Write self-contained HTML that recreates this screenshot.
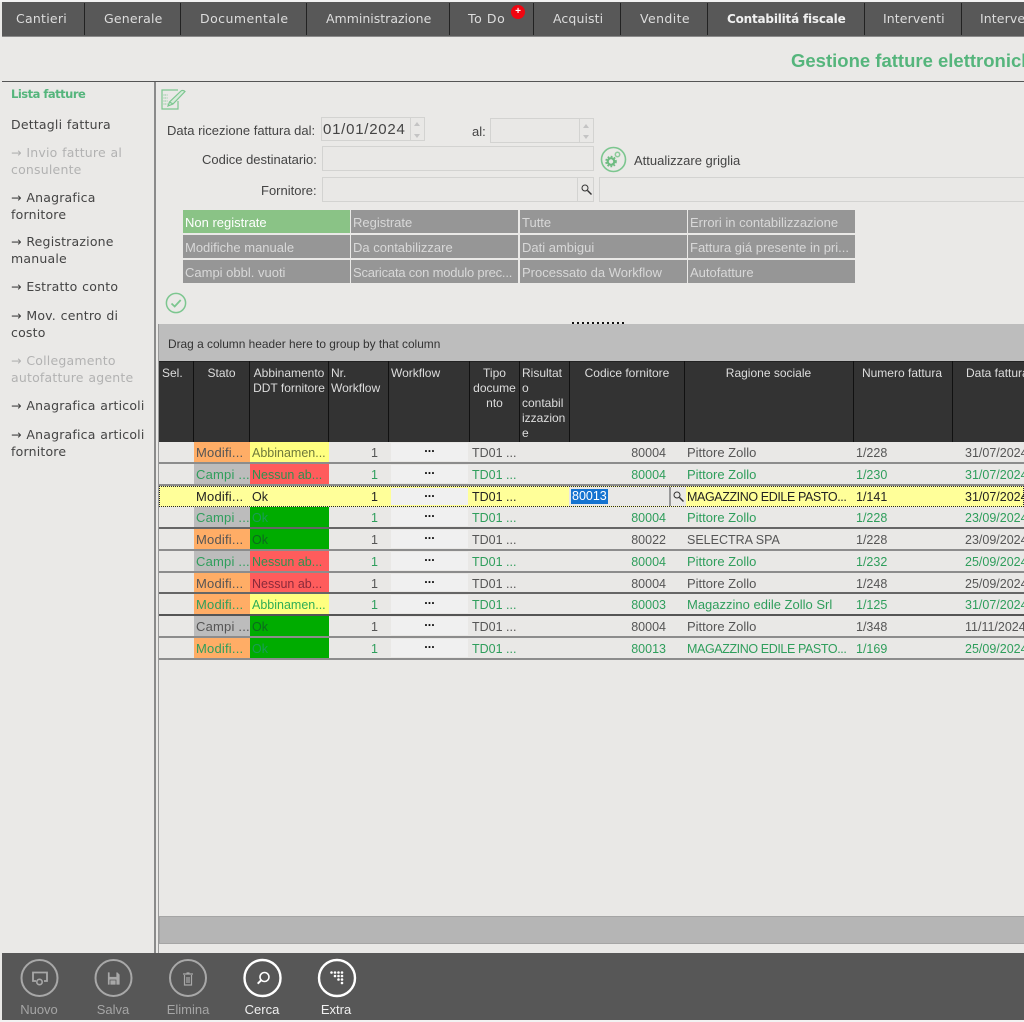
<!DOCTYPE html>
<html><head><meta charset="utf-8"><style>
html,body{margin:0;padding:0;background:#eae9e7}
body{width:1024px;height:1022px;position:relative;overflow:hidden;font-family:"Liberation Sans",sans-serif;font-size:13px;color:#444}
div,span{position:absolute;white-space:nowrap;box-sizing:border-box}
#nav{left:2px;top:2px;width:1022px;height:35px;background:#585858;border-bottom:1px solid #8a8a8a}
.n{top:9px;font:12.5px "DejaVu Sans",sans-serif;color:#ddd;letter-spacing:.1px}
.s{top:1px;width:1px;height:32px;background:#222}
.m{left:11px;font:12.5px/17px "DejaVu Sans",sans-serif;color:#444;letter-spacing:.2px;word-spacing:.5px}
.g{color:#b2b2b2}
.inp{background:#e9e8e6;border:1px solid #d3d3d1;height:25px}
.b{height:23px;width:167px;background:#969696;color:#d8d8d8;padding:5px 0 0 2px;font-size:13px;line-height:15px}
.h{top:366px;color:#ddd;line-height:15px;font-size:12px;text-align:center;white-space:pre}
.v{top:361px;width:1px;height:81px;background:#111}
.r{left:159px;width:865px;background:#e9e8e6;border-bottom:2px solid #8c8c8c;color:#555;font-size:12.5px}
.r div{top:0;bottom:0;padding-top:3px;line-height:17px}
.sel div{padding-top:2px}
.r .st{left:35px;width:56px;padding-left:2px;font-size:13px;letter-spacing:.2px;padding-top:2px}
.ab{left:91px;width:79px;padding-left:2px}
.nr{left:170px;width:49px;text-align:right}
.r .wf{left:232px;width:77px;background:#f0f0f0;color:#111;text-align:center;font-weight:bold;margin:1px 0;padding-top:0;line-height:11px}
.td{left:313px}
.co{left:410px;width:97px;text-align:right}
.r .ra{left:528px;font-size:13px;padding-top:2px}
.r .caps{font-size:12.5px;letter-spacing:-.4px;padding-top:3px}
.r.sel .caps{padding-top:2px}
.nu{left:697px}
.da{left:806px}
.r.gr{color:#2f9e5c}
.or{background:#ffad66}.gy{background:#bcbcbc}.ye{background:#ffff80}.re{background:#ff5c5c}.ge{background:#00ac00}
.r .okn{color:#0c6a1e}.r .okg{color:#1a9c56}
.r .rn{color:#8a2a3a}.r .rg{color:#2f9150}
.r .yn{color:#6f7a3a}.r .yg{color:#2fae55}
.bl{top:1002px;font-size:13px;color:#a5a5a5;transform:translateX(-50%)}
</style></head><body>
<div style="left:0;top:0;width:1024px;height:2px;background:#f2f2f2"></div>
<div id="nav">
<span class="s" style="left:82px"></span><span class="s" style="left:178px"></span><span class="s" style="left:304px"></span><span class="s" style="left:447px"></span><span class="s" style="left:531px"></span><span class="s" style="left:618px"></span><span class="s" style="left:705px"></span><span class="s" style="left:862px"></span><span class="s" style="left:959px"></span>
<span class="n" style="left:14px;letter-spacing:.25px">Cantieri</span><span class="n" style="left:102px;letter-spacing:.2px">Generale</span><span class="n" style="left:198px;letter-spacing:.45px">Documentale</span><span class="n" style="left:324px;letter-spacing:0">Amministrazione</span><span class="n" style="left:466px;letter-spacing:.6px">To Do</span>
<span style="left:509px;top:3px;width:14px;height:14px;border-radius:50%;background:#f00510;color:#fff;font:bold 10px/13px 'Liberation Sans',sans-serif;text-align:center">+</span>
<span class="n" style="left:551px">Acquisti</span><span class="n" style="left:638px;letter-spacing:.4px">Vendite</span><span class="n" style="left:725px;top:10px;font-weight:bold;color:#f0f0f0;font-size:12px;letter-spacing:-.2px">Contabilitá fiscale</span><span class="n" style="left:881px">Interventi</span><span class="n" style="left:978px">Interventi</span>
</div>
<div style="left:791px;top:50px;font-size:18.5px;font-weight:bold;color:#55b57c">Gestione fatture elettroniche</div>
<div style="left:2px;top:81px;width:1022px;height:1px;background:#555"></div>
<div style="left:154px;top:82px;width:2px;height:871px;background:#8a8a8a"></div>

<div class="m" style="top:86px;color:#55b57c;font-weight:bold;font-size:11.5px;letter-spacing:-.5px;word-spacing:0">Lista fatture</div>
<div class="m" style="top:116px">Dettagli fattura</div>
<div class="m g" style="top:144px">→ Invio fatture al<br>consulente</div>
<div class="m" style="top:189px">→ Anagrafica<br>fornitore</div>
<div class="m" style="top:233px">→ Registrazione<br>manuale</div>
<div class="m" style="top:278px">→ Estratto conto</div>
<div class="m" style="top:307px">→ Mov. centro di<br>costo</div>
<div class="m g" style="top:352px">→ Collegamento<br>autofatture agente</div>
<div class="m" style="top:397px">→ Anagrafica articoli</div>
<div class="m" style="top:426px">→ Anagrafica articoli<br>fornitore</div>

<svg style="position:absolute;left:160px;top:88px" width="28" height="24" viewBox="0 0 28 24" fill="none" stroke="#7cc68f" stroke-width="1.2"><path d="M18 2H2v19h16v-8"/><path d="M3.500 7h4M3.500 10h4M3.500 13h4M3.500 16h4" stroke-width=".9" stroke-dasharray="1 .7"/><path d="M8 18l1.500-4L21 3c1-1 3-.5 4 .5L13 16z" fill="#d6ebda"/><path d="M9.500 14l3.500 2"/></svg>

<div style="left:167px;top:123px">Data ricezione fattura dal:</div>
<div class="inp" style="left:321px;top:117px;width:104px;height:24px"></div>
<div style="left:323px;top:121px;font-size:15px;color:#444;letter-spacing:.75px">01/01/2024</div>
<div style="left:410px;top:118px;width:1px;height:22px;background:#d3d3d1"></div>
<div style="left:414px;top:122px;border:3px solid transparent;border-bottom:4px solid #c4c4c4;border-top:0"></div>
<div style="left:414px;top:134px;border:3px solid transparent;border-top:4px solid #c4c4c4;border-bottom:0"></div>
<div style="left:472px;top:124px">al:</div>
<div class="inp" style="left:490px;top:118px;width:104px"></div>
<div style="left:579px;top:119px;width:1px;height:23px;background:#d3d3d1"></div>
<div style="left:583px;top:124px;border:3px solid transparent;border-bottom:4px solid #c4c4c4;border-top:0"></div>
<div style="left:583px;top:135px;border:3px solid transparent;border-top:4px solid #c4c4c4;border-bottom:0"></div>
<div style="left:202px;top:152px">Codice destinatario:</div>
<div class="inp" style="left:322px;top:146px;width:272px"></div>
<svg style="position:absolute;left:600px;top:146px" width="27" height="27" viewBox="0 0 27 27" fill="none"><circle cx="13.500" cy="13.500" r="12" stroke="#7cc68f" stroke-width="1.6"/><circle cx="11" cy="15.500" r="3.300" stroke="#6dbb80" stroke-width="2.200"/><circle cx="11" cy="15.500" r="5" stroke="#6dbb80" stroke-width="1.600" stroke-dasharray="1.800 1.500"/><circle cx="17.500" cy="8.500" r="2.200" stroke="#8ccb9b" stroke-width="1.500"/></svg>
<div style="left:634px;top:153px">Attualizzare griglia</div>
<div style="left:261px;top:183px">Fornitore:</div>
<div class="inp" style="left:322px;top:177px;width:272px"></div>
<div style="left:577px;top:178px;width:1px;height:23px;background:#d3d3d1"></div>
<svg style="position:absolute;left:580px;top:183px" width="13" height="13" viewBox="0 0 13 13" fill="none" stroke="#333"><circle cx="5" cy="5" r="3"/><path d="M7.500 7.500l4 4" stroke-width="1.400"/></svg>
<div class="inp" style="left:599px;top:177px;width:430px"></div>

<div class="b" style="left:183px;top:210px;background:#8ac386;color:#fff">Non registrate</div>
<div class="b" style="left:351px;top:210px">Registrate</div>
<div class="b" style="left:520px;top:210px">Tutte</div>
<div class="b" style="left:688px;top:210px">Errori in contabilizzazione</div>
<div class="b" style="left:183px;top:235px">Modifiche manuale</div>
<div class="b" style="left:351px;top:235px">Da contabilizzare</div>
<div class="b" style="left:520px;top:235px">Dati ambigui</div>
<div class="b" style="left:688px;top:235px">Fattura giá presente in pri...</div>
<div class="b" style="left:183px;top:260px">Campi obbl. vuoti</div>
<div class="b" style="left:351px;top:260px;letter-spacing:-.2px">Scaricata con modulo prec...</div>
<div class="b" style="left:520px;top:260px">Processato da Workflow</div>
<div class="b" style="left:688px;top:260px">Autofatture</div>
<svg style="position:absolute;left:165px;top:292px" width="22" height="22" viewBox="0 0 22 22" fill="none" stroke="#7cc68f"><circle cx="11" cy="11" r="9.600" stroke-width="1.500"/><path d="M6.500 11.500l3.200 3 6-6.500" stroke-width="1.800"/></svg>

<div style="left:572px;top:322px;width:53px;height:2px;background-image:repeating-linear-gradient(90deg,#111 0 2px,transparent 2px 5px)"></div>
<div style="left:158px;top:324px;width:866px;height:629px;border-left:1px solid #999;background:#e9e8e6"></div>
<div style="left:159px;top:324px;width:865px;height:37px;background:#bdbdbd"></div>
<div style="left:168px;top:337px;font-size:11.9px;color:#333">Drag a column header here to group by that column</div>
<div style="left:159px;top:361px;width:865px;height:81px;background:#333;border-top:1px solid #222"></div>
<span class="v" style="left:193px"></span><span class="v" style="left:249px"></span><span class="v" style="left:328px"></span><span class="v" style="left:388px"></span><span class="v" style="left:469px"></span><span class="v" style="left:519px"></span><span class="v" style="left:569px"></span><span class="v" style="left:684px"></span><span class="v" style="left:853px"></span><span class="v" style="left:952px"></span>
<div class="h" style="left:162px">Sel.</div>
<div class="h" style="left:194px;width:55px">Stato</div>
<div class="h" style="left:250px;width:78px">Abbinamento
DDT fornitore</div>
<div class="h" style="left:331px;text-align:left">Nr.
Workflow</div>
<div class="h" style="left:391px">Workflow</div>
<div class="h" style="left:470px;width:49px">Tipo
docume
nto</div>
<div class="h" style="left:522px;text-align:left">Risultat
o
contabil
izzazion
e</div>
<div class="h" style="left:570px;width:114px">Codice fornitore</div>
<div class="h" style="left:685px;width:167px">Ragione sociale</div>
<div class="h" style="left:853px;width:98px">Numero fattura</div>
<div class="h" style="left:966px">Data fattura</div>

<div class="r" style="top:442px;height:22px"><div class="st or">Modifi...</div><div class="ab ye yn">Abbinamen...</div><div class="nr">1</div><div class="wf">...</div><div class="td">TD01 ...</div><div class="co">80004</div><div class="ra">Pittore Zollo</div><div class="nu">1/228</div><div class="da">31/07/2024</div></div>
<div class="r gr" style="top:464px;height:22px"><div class="st gy">Campi ...</div><div class="ab re rg">Nessun ab...</div><div class="nr">1</div><div class="wf">...</div><div class="td">TD01 ...</div><div class="co">80004</div><div class="ra">Pittore Zollo</div><div class="nu">1/230</div><div class="da">31/07/2024</div></div>
<div class="r sel" style="top:486px;height:21px;background:#ffff99;color:#222;border:1px dotted #223;z-index:2;left:159px"><div class="st" style="left:34px;padding-top:1px">Modifi...</div><div class="ab" style="left:90px">Ok</div><div class="nr" style="left:169px">1</div><div class="wf" style="left:231px">...</div><div class="td" style="left:312px">TD01 ...</div><div style="left:409px;width:100px;background:#e9e8e6;padding:0 0 0 2px"><span style="left:2px;top:2px;background:#1573d0;color:#fff;height:15px;line-height:15px;padding:0 1px">80013</span></div><div style="left:509px;width:17px;background:#e9e8e6;border-left:2px solid #999"><svg style="position:absolute;left:1px;top:3px" width="13" height="13" viewBox="0 0 13 13" fill="none" stroke="#333"><circle cx="5" cy="5" r="3"/><path d="M7.500 7.500l4 4" stroke-width="1.400"/></svg></div><div class="ra caps" style="left:527px">MAGAZZINO EDILE PASTO...</div><div class="nu" style="left:696px">1/141</div><div class="da" style="left:805px">31/07/2024</div></div>
<div class="r gr" style="top:507px;height:22px;border-bottom-color:#666"><div class="st gy">Campi ...</div><div class="ab ge okg">Ok</div><div class="nr">1</div><div class="wf">...</div><div class="td">TD01 ...</div><div class="co">80004</div><div class="ra">Pittore Zollo</div><div class="nu">1/228</div><div class="da">23/09/2024</div></div>
<div class="r" style="top:529px;height:22px"><div class="st or">Modifi...</div><div class="ab ge okn">Ok</div><div class="nr">1</div><div class="wf">...</div><div class="td">TD01 ...</div><div class="co">80022</div><div class="ra" style="font-size:12.5px;padding-top:3px">SELECTRA SPA</div><div class="nu">1/228</div><div class="da">23/09/2024</div></div>
<div class="r gr" style="top:551px;height:22px"><div class="st gy">Campi ...</div><div class="ab re rg">Nessun ab...</div><div class="nr">1</div><div class="wf">...</div><div class="td">TD01 ...</div><div class="co">80004</div><div class="ra">Pittore Zollo</div><div class="nu">1/232</div><div class="da">25/09/2024</div></div>
<div class="r" style="top:573px;height:21px;border-bottom-color:#666"><div class="st or">Modifi...</div><div class="ab re rn">Nessun ab...</div><div class="nr">1</div><div class="wf">...</div><div class="td">TD01 ...</div><div class="co">80004</div><div class="ra">Pittore Zollo</div><div class="nu">1/248</div><div class="da">25/09/2024</div></div>
<div class="r gr" style="top:594px;height:22px;border-bottom-color:#555"><div class="st or">Modifi...</div><div class="ab ye yg">Abbinamen...</div><div class="nr">1</div><div class="wf">...</div><div class="td">TD01 ...</div><div class="co">80003</div><div class="ra">Magazzino edile Zollo Srl</div><div class="nu">1/125</div><div class="da">31/07/2024</div></div>
<div class="r" style="top:616px;height:22px"><div class="st gy">Campi ...</div><div class="ab ge okn">Ok</div><div class="nr">1</div><div class="wf">...</div><div class="td">TD01 ...</div><div class="co">80004</div><div class="ra">Pittore Zollo</div><div class="nu">1/348</div><div class="da">11/11/2024</div></div>
<div class="r gr" style="top:638px;height:22px"><div class="st or">Modifi...</div><div class="ab ge okg">Ok</div><div class="nr">1</div><div class="wf">...</div><div class="td">TD01 ...</div><div class="co">80013</div><div class="ra caps">MAGAZZINO EDILE PASTO...</div><div class="nu">1/169</div><div class="da">25/09/2024</div></div>

<div style="left:159px;top:916px;width:865px;height:28px;background:#b5b5b5;border:1px solid #a5a5a5;border-right:0"></div>

<div style="left:2px;top:953px;width:1022px;height:67px;background:#575757"></div>
<div style="left:0;top:1020px;width:1024px;height:2px;background:#f2f2f2"></div>
<svg style="position:absolute;left:0;top:953px" width="380" height="50" fill="none">
<g stroke="#a8a8a8" stroke-width="2"><circle cx="39.500" cy="25" r="18"/><circle cx="113.500" cy="25" r="18"/><circle cx="188" cy="25" r="18"/></g>
<g stroke="#fff" stroke-width="2.400"><circle cx="262.500" cy="25" r="18"/><circle cx="337" cy="25" r="18"/></g>
<path d="M36 28h-3v-8.500h14V28h-3" stroke="#a8a8a8" stroke-width="1.800"/><circle cx="39.500" cy="29" r="2.700" stroke="#a8a8a8" stroke-width="1.600"/>
<path d="M107.500 19h10l2.500 2.500V32h-12.500zM110 19v4.500h6V19M110 32v-5h6v5" fill="#a8a8a8" stroke="#575757" stroke-width=".8"/>
<path d="M183 21h10M184.500 22v10h7V22M187 24v6M189 24v6M186.500 20h3" stroke="#a8a8a8" stroke-width="1.200"/>
<circle cx="264.500" cy="24" r="4.500" stroke="#fff" stroke-width="1.600"/><path d="M261.200 27.200l-3.500 3.500" stroke="#fff" stroke-width="2"/>
<g fill="#fff"><circle cx="331.500" cy="19.500" r="1.300"/><circle cx="335" cy="19.500" r="1.300"/><circle cx="338.500" cy="19.500" r="1.300"/><circle cx="342" cy="19.500" r="1.300"/><circle cx="335" cy="23" r="1.300"/><circle cx="338.500" cy="23" r="1.300"/><circle cx="342" cy="23" r="1.300"/><circle cx="338.500" cy="26.500" r="1.300"/><circle cx="342" cy="26.500" r="1.300"/><circle cx="342" cy="30" r="1.300"/></g>
</svg>
<div class="bl" style="left:39px">Nuovo</div><div class="bl" style="left:113px">Salva</div><div class="bl" style="left:188px">Elimina</div><div class="bl" style="left:262px;color:#f0f0f0">Cerca</div><div class="bl" style="left:336px;color:#f0f0f0">Extra</div>
</body></html>
